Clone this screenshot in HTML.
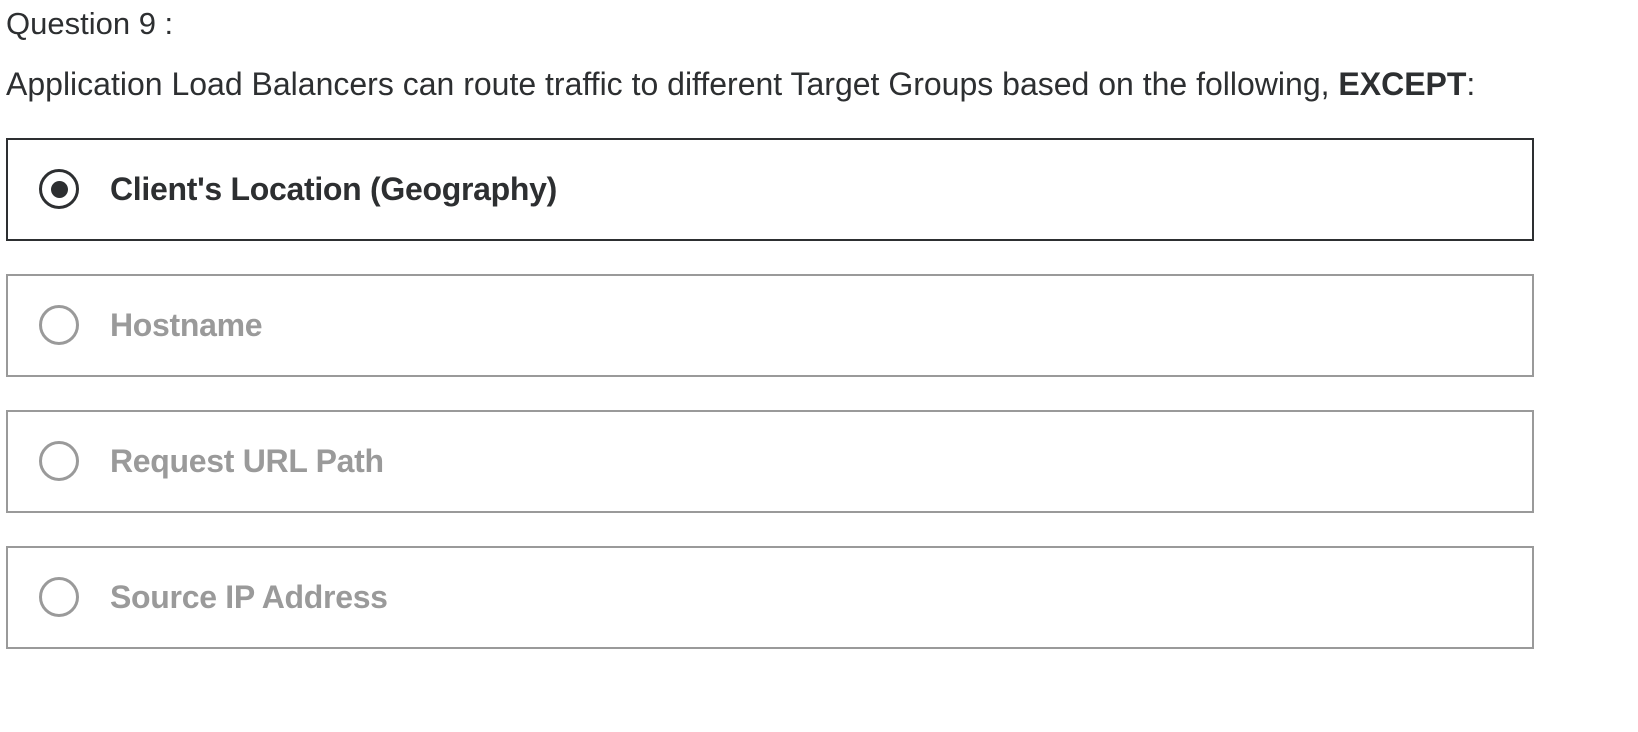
<!DOCTYPE html>
<html><head><style>
body{margin:0;background:#fff;width:1638px;height:732px;overflow:hidden;font-family:"Liberation Sans",sans-serif;color:#2d2f31}
.q{position:absolute;left:6px;top:6px;font-size:31px}
.p{position:absolute;left:6px;top:66px;font-size:32px}
.opt{position:absolute;left:6px;width:1524px;height:99px;border:2px solid #9a9a9a;display:flex;align-items:center}
.opt.sel{border-color:#2d2f31}
.r{position:absolute;left:31px;top:29px;width:34px;height:34px;border:3.5px solid #9a9a9a;border-radius:50%}
.sel .r{border-color:#2d2f31}
.sel .r::after{content:"";position:absolute;left:8.5px;top:8.5px;width:17px;height:17px;border-radius:50%;background:#2d2f31}
.t{position:absolute;left:102px;font-size:32px;font-weight:bold;color:#9a9a9a;letter-spacing:-0.3px}
.sel .t{color:#2d2f31}
</style></head><body>
<div class="q">Question 9 :</div>
<div class="p">Application Load Balancers can route traffic to different Target Groups based on the following, <b>EXCEPT</b>:</div>
<div class="opt sel" style="top:138px"><div class="r"></div><div class="t">Client's Location (Geography)</div></div>
<div class="opt" style="top:274px"><div class="r"></div><div class="t">Hostname</div></div>
<div class="opt" style="top:410px"><div class="r"></div><div class="t">Request URL Path</div></div>
<div class="opt" style="top:546px"><div class="r"></div><div class="t">Source IP Address</div></div>
</body></html>
